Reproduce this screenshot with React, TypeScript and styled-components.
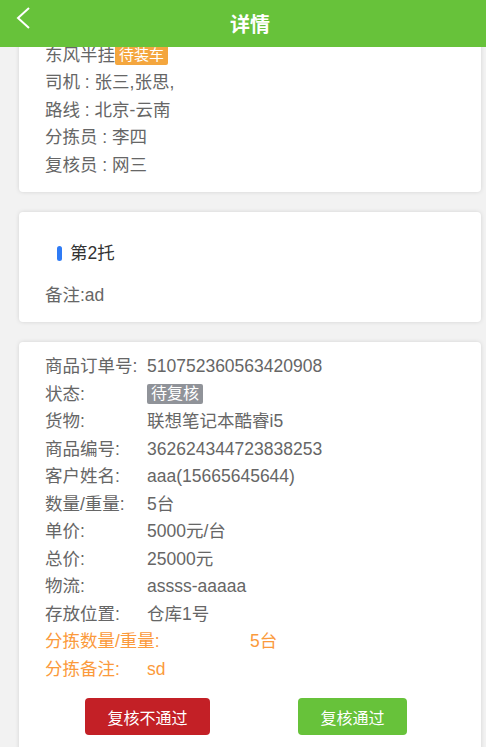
import React from 'react';
import styled, { createGlobalStyle } from 'styled-components';

const GlobalStyle = createGlobalStyle`
  html, body {
    margin: 0;
    padding: 0;
    background: #f2f2f2;
    font-family: "Liberation Sans", "Noto Sans CJK SC", sans-serif;
  }
  * {
    box-sizing: border-box;
  }
`;

const Page = styled.div`
  width: 486px;
  height: 747px;
  overflow: hidden;
  background: #f2f2f2;
`;

const Header = styled.header`
  position: sticky;
  top: 0;
  z-index: 10;
  height: 47px;
  background: #67c23a;
  display: flex;
  align-items: center;
  justify-content: center;
  padding-left: 14px;
`;

const BackButton = styled.button`
  position: absolute;
  left: 12px;
  top: 5px;
  width: 24px;
  height: 26px;
  padding: 0;
  border: none;
  background: none;
  display: flex;
  align-items: center;
  justify-content: center;
`;

const Title = styled.h1`
  margin: 0;
  color: #fff;
  font-size: 20px;
  font-weight: bold;
  font-family: "Noto Sans CJK SC", sans-serif;
`;

const Content = styled.main`
  display: flex;
  flex-direction: column;
  gap: 20px;
  padding: 0 5px 0 19px;
  margin-top: -19.5px;
`;

const Card = styled.section<{ $pad?: string }>`
  background: #fff;
  border-radius: 4px;
  box-shadow: 0 0 4px rgba(0, 0, 0, 0.13);
  padding: ${({ $pad }) => $pad || '14px 26px 13px'};
  color: #666;
  font-size: 17.5px;
  line-height: 27.5px;
`;

const Line = styled.div`
  white-space: nowrap;
`;

const Badge = styled.span<{ $bg: string; $size?: string }>`
  display: inline-block;
  background: ${({ $bg }) => $bg};
  color: #fff;
  font-size: ${({ $size }) => $size || '16px'};
  line-height: 20px;
  padding: 0 4px;
  border-radius: 2px;
  vertical-align: 1px;
`;

const TrayTitle = styled.div`
  display: flex;
  align-items: center;
  gap: 8px;
  padding-left: 12px;
  color: #333;
  margin-bottom: 14px;
`;

const Marker = styled.span`
  width: 5px;
  height: 15px;
  border-radius: 3px;
  background: #2f7bf5;
`;

const Row = styled.div<{ $accent?: boolean }>`
  display: flex;
  white-space: nowrap;
  color: ${({ $accent }) => ($accent ? '#fb9a3c' : '#666')};
`;

const Label = styled.span<{ $wide?: boolean }>`
  flex: 0 0 ${({ $wide }) => ($wide ? '205px' : '102px')};
`;

const Value = styled.span`
  flex: 1;
`;

const Actions = styled.div`
  display: grid;
  grid-template-columns: 1fr 1fr;
  justify-items: center;
  margin-top: 15px;
`;

const ActionButton = styled.button<{ $bg: string }>`
  height: 37px;
  padding: 0 22px;
  border: none;
  border-radius: 4px;
  background: ${({ $bg }) => $bg};
  color: #fff;
  font-size: 16px;
  font-family: "Noto Sans CJK SC", sans-serif;
`;

const details: { label: string; value: React.ReactNode }[] = [
  { label: '商品订单号:', value: '510752360563420908' },
  { label: '状态:', value: <Badge $bg="#909399">待复核</Badge> },
  { label: '货物:', value: '联想笔记本酷睿i5' },
  { label: '商品编号:', value: '362624344723838253' },
  { label: '客户姓名:', value: 'aaa(15665645644)' },
  { label: '数量/重量:', value: '5台' },
  { label: '单价:', value: '5000元/台' },
  { label: '总价:', value: '25000元' },
  { label: '物流:', value: 'assss-aaaaa' },
  { label: '存放位置:', value: '仓库1号' },
];

export default function App() {
  return (
    <Page>
      <GlobalStyle />
      <Header>
        <BackButton aria-label="返回">
          <svg width="16" height="22" viewBox="0 0 16 22">
            <polyline points="13,1 2,11 13,21" fill="none" stroke="#fff" strokeWidth="2" />
          </svg>
        </BackButton>
        <Title>详情</Title>
      </Header>
      <Content>
        <Card>
          <Line>
            东风半挂<Badge $bg="#f4a63e" $size="15px">待装车</Badge>
          </Line>
          <Line>司机 : 张三,张思,</Line>
          <Line>路线 : 北京-云南</Line>
          <Line>分拣员 : 李四</Line>
          <Line>复核员 : 网三</Line>
        </Card>
        <Card $pad="28px 26px 13px">
          <TrayTitle>
            <Marker />
            第2托
          </TrayTitle>
          <Line>备注:ad</Line>
        </Card>
        <Card $pad="11px 26px 20px">
          {details.map((d) => (
            <Row key={d.label}>
              <Label>{d.label}</Label>
              <Value>{d.value}</Value>
            </Row>
          ))}
          <Row $accent>
            <Label $wide>分拣数量/重量:</Label>
            <Value>5台</Value>
          </Row>
          <Row $accent>
            <Label>分拣备注:</Label>
            <Value>sd</Value>
          </Row>
          <Actions>
            <ActionButton $bg="#c32026">复核不通过</ActionButton>
            <ActionButton $bg="#67c23a">复核通过</ActionButton>
          </Actions>
        </Card>
      </Content>
    </Page>
  );
}
